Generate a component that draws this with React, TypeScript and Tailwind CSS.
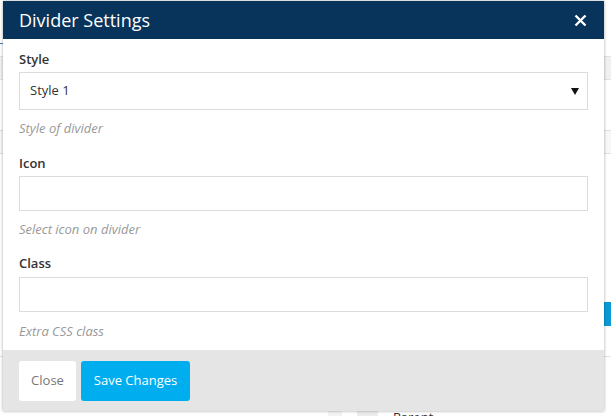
export default function App() {
  return (
    <div className="relative w-[611px] h-[416px] overflow-hidden bg-white font-['Open_Sans',sans-serif]">
      {/* page behind the modal */}
      <div className="absolute inset-0">
        <div className="h-[34px]" />
        <div className="h-[10px] border-b border-[#3a7fc1] w-[6px]" />
        <div className="mt-[12px] h-[24px] bg-[#f1f1f1] border-y border-[#e2e2e2]" />
        <div className="mt-[50px] h-[24px] border-y border-[#e2e2e2] bg-[#f7f7f7]" />
        <div className="mt-[148px] ml-[604px] h-[24px] bg-[#0a9bd6]" />
        <div className="mt-[30px] h-px bg-[#e2e2e2]" />
        <div className="mt-[50px] ml-[328px] flex gap-[15px]">
          <div className="w-[14px] h-[20px] bg-[#f3f3f3]" />
          <div className="w-[21px] h-[20px] bg-[#ececec]" />
          <span className="text-[13px] text-[#333] leading-[20px]">Parent</span>
        </div>
      </div>

      {/* modal */}
      <div className="absolute left-[3px] top-[1px] w-[601px] bg-white shadow-[0_0_3px_rgba(0,0,0,0.35)]">
        <div className="h-[38px] bg-[#08335a] pl-[16px] pr-[17px] flex items-center justify-between">
          <span className="text-white text-[18px] leading-[24px]">Divider Settings</span>
          <svg width="13" height="13" viewBox="0 0 13 13" className="mt-[1px]">
            <path d="M1.5 1.5 L11.5 11.5 M11.5 1.5 L1.5 11.5" stroke="#fff" strokeWidth="2.4" strokeLinecap="butt" />
          </svg>
        </div>

        <div className="px-[16px] pt-[10px] pb-[10px] text-[#333]">
          <div className="text-[13px] font-semibold leading-[20px] mb-[3px]">Style</div>
          <div className="h-[38px] border border-[#dcdcdc] flex items-center justify-between pl-[10px] pr-[8px]">
            <span className="text-[13px]">Style 1</span>
            <svg width="8" height="7" viewBox="0 0 8 7">
              <path d="M0 0 H8 L4 7 Z" fill="#111" />
            </svg>
          </div>
          <div className="mt-[9px] text-[13px] italic leading-[18px] text-[#999]">Style of divider</div>

          <div className="mt-[16px] text-[13px] font-semibold leading-[20px] mb-[3px]">Icon</div>
          <div className="h-[35px] border border-[#dcdcdc]" />
          <div className="mt-[9px] text-[13px] italic leading-[18px] text-[#999]">Select icon on divider</div>

          <div className="mt-[15px] text-[13px] font-semibold leading-[20px] mb-[4px]">Class</div>
          <div className="h-[35px] border border-[#dcdcdc]" />
          <div className="mt-[10px] text-[13px] italic leading-[18px] text-[#999]">Extra CSS class</div>
        </div>

        <div className="h-[61px] bg-[#e5e5e5] pl-[16px] pt-[11px] flex gap-[5px] items-start">
          <button className="w-[57px] h-[40px] rounded-[3px] bg-white text-[13px] text-[#777]">Close</button>
          <button className="w-[109px] h-[40px] rounded-[3px] bg-[#00adef] text-[13px] text-white">Save Changes</button>
        </div>
      </div>
    </div>
  );
}
